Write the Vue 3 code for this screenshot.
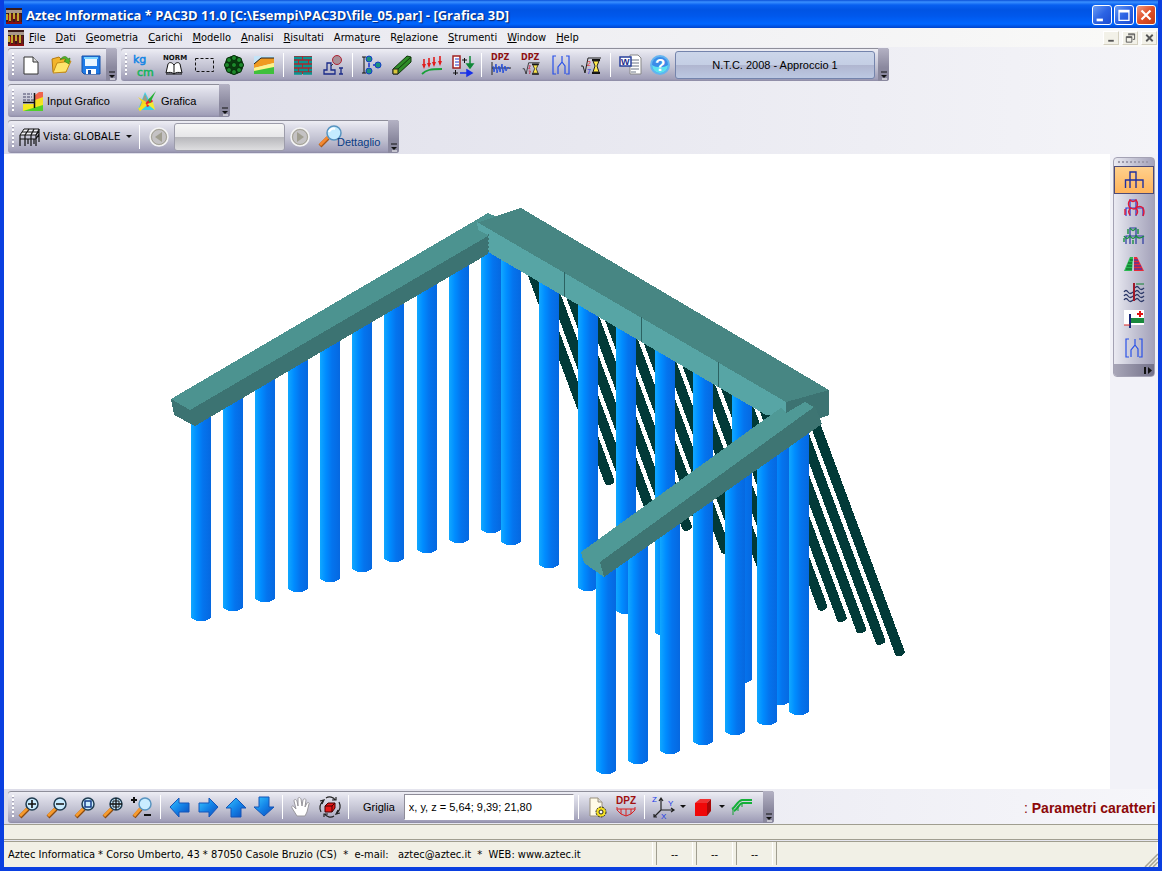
<script setup>
const menus = [
  ['', 'F', 'ile'], ['', 'D', 'ati'], ['', 'G', 'eometria'], ['', 'C', 'arichi'], ['', 'M', 'odello'], ['', 'A', 'nalisi'],
  ['', 'R', 'isultati'], ['Arma', 't', 'ure'], ['R', 'e', 'lazione'], ['', 'S', 'trumenti'], ['', 'W', 'indow'], ['', 'H', 'elp']
]

const lens = `<path d="M2 22l8-8" stroke="#8a4a10" stroke-width="4"/><path d="M2 21l8-8" stroke="#f79a2c" stroke-width="3"/><circle cx="14" cy="9" r="6" fill="#c9ecff" stroke="#203c50" stroke-width="1.5"/>`
const dpz = `<text x="2" y="7" font-family="DejaVu Sans" font-size="8" font-weight="bold" fill="#8e1010">DPZ</text>`
const root = `<path d="M2 13h2l2 7 3-15h13" fill="none" stroke="#222"/><path d="M13 7h8M13 20h8" stroke="#111" stroke-width="2"/><path d="M14 8h6l-2 5 2 6h-6l2-6z" fill="#ffe94a" stroke="#222"/>`
const rootDigits = `<text x="8" y="13" font-size="7" fill="#e01818">2</text><text x="8" y="21" font-size="7" fill="#1830e0">7</text>`
const brackets = `<path d="M7 3H4v18h3M17 3h3v18h-3M13 3v6l-4 5v7M13 9l3 4v8" fill="none" stroke="#2850e8" stroke-width="1.2"/>`

const icons = {
  app: `<rect width="16" height="16" fill="#3a1a18"/><path d="M0 2h16v3H0z" fill="#a8988c"/><path d="M1 6v6M4 5v8M8 5v6M12 5v8" stroke="#f0d838" stroke-width="1.500"/><path d="M2.500 7v9M6 6v10M10 7v9M14 6v10" stroke="#a01818"/><path d="M0 14h16v2H0z" fill="#8a1010"/>`,
  new: `<path d="M5 4h9l5 5v12H5z" fill="#fff" stroke="#333"/><path d="M14 4v5h5" fill="#ddd" stroke="#333"/>`,
  open: `<path d="M3 6l7-2 2 2h5v13H4z" fill="#f3b52b" stroke="#b47a10"/><path d="M4 20l4-10 14-2-5 11z" fill="#ffe56c" stroke="#c48b18"/><path d="M11 7c3-5 7-4 8-1l2-1-1 6-5-3 2-1c-1-2-3-2-6 0z" fill="#54b428" stroke="#2f7a16" stroke-width=".6"/>`,
  save: `<path d="M3 3h18v18H5l-2-2z" fill="#1f7be8" stroke="#1450a8"/><path d="M6 4h12v9H6z" fill="#eaf6ff"/><path d="M5 4h14v2H5z" fill="#7cd4ff"/><path d="M7 16h10v5H7z" fill="#fff"/><path d="M9 17h3v4H9z" fill="#1450a8"/>`,
  kg: `<g font-family="DejaVu Sans"><text x="1" y="10" font-size="11" fill="#1484e4" stroke="#1484e4" stroke-width=".5">kg</text><text x="5" y="23" font-size="11" fill="#14b45c" stroke="#14b45c" stroke-width=".5">cm</text></g>`,
  norm: `<text x="1" y="7" font-family="DejaVu Sans" font-size="7" font-weight="bold" fill="#111">NORM</text><path d="M12 12c-2-3-5-3-6-1l-2 9c3-1 6-1 8 1 2-2 5-2 8-1l-2-9c-1-2-4-2-6 1z" fill="#fff" stroke="#111"/><path d="M12 12v9M4 21h16" stroke="#111"/>`,
  rect: `<rect x="3.500" y="5.500" width="18" height="13" fill="none" stroke="#111" stroke-dasharray="3 2"/>`,
  bush: `<circle cx="12" cy="12" r="9.500" fill="#0a3a10"/><g fill="#1d8a2c" stroke="#062f0a"><circle cx="12" cy="12" r="2.500"/><circle cx="12" cy="5" r="2.500"/><circle cx="12" cy="19" r="2.500"/><circle cx="5" cy="12" r="2.500"/><circle cx="19" cy="12" r="2.500"/><circle cx="7" cy="7" r="2.500"/><circle cx="17" cy="7" r="2.500"/><circle cx="7" cy="17" r="2.500"/><circle cx="17" cy="17" r="2.500"/></g>`,
  layers: `<rect x="2" y="3" width="20" height="18" fill="#c4e4f8"/><path d="M2 11l7-6h13v5L2 15z" fill="#f09a20"/><path d="M2 15l20-5v5L2 19z" fill="#fff38a"/><path d="M2 18l20-4v7H2z" fill="#3fc03c"/><path d="M2 11l7-6h13" fill="none" stroke="#222"/>`,
  brick: `<rect x="3" y="3" width="18" height="18" fill="#a82830"/><path d="M3 5h8M12 5h9M3 9h4M8 9h9M18 9h3M3 13h8M12 13h9M3 17h4M8 17h9M18 17h3M3 20.500h8M12 20.500h9" stroke="#0a9490" stroke-width="2.600"/>`,
  found: `<circle cx="16" cy="7" r="4.500" fill="#a89098" stroke="#b02030"/><path d="M3 21v-4h3v-7h4v7h4v4zM18 15h4M20 15v6M18 21h4" fill="none" stroke="#1a2a88" stroke-width="1.300"/><path d="M12 11l-2 2" stroke="#333"/>`,
  nodes: `<path d="M4 4v16M2 4h4M2 20h4" stroke="#111"/><g fill="#1a9080" stroke="#143cc8"><circle cx="9" cy="6" r="3"/><circle cx="9" cy="18" r="3"/><circle cx="18" cy="12" r="3"/></g><path d="M9 10v4M13 12h2" stroke="#1b30d0" stroke-width="1.500"/>`,
  beam: `<path d="M3 16L17 3l4 1v5L8 21H3z" fill="#2f8c28" stroke="#10380c"/><path d="M3 16h5v5H3z" fill="#d8c83c" stroke="#222"/><path d="M8 16L21 4" stroke="#10380c"/>`,
  load: `<path d="M4 6v8M9 5v8M14 4v8M20 3v8" stroke="#e01c1c" stroke-width="1.600"/><path d="M2 11l2 5 2-5zM7 10l2 5 2-5zM12 9l2 5 2-5zM18 8l2 5 2-5z" fill="#e01c1c"/><path d="M2 21c4-4 8-5 20-5" fill="none" stroke="#18a038" stroke-width="1.800"/>`,
  comb: `<path d="M3 3h7v12H3z" fill="#fff" stroke="#a02020" stroke-width="1.500"/><path d="M5 6h4M5 9h4M5 12h4" stroke="#2038c8"/><path d="M12 7h5M14.500 5v5M3 20h5M5.500 17v5" stroke="#111"/><path d="M20 3v10M17 11l3 4 3-4z" stroke="#108838" stroke-width="1.500" fill="#108838"/><path d="M10 20h9M17 17l5 3-5 3z" stroke="#1830e8" stroke-width="1.500" fill="#1830e8"/>`,
  dpzWave: dpz + `<path d="M3 9v13M3 15h19" stroke="#222"/><path d="M4 13l1 6 2-8 1 9 2-7 1 6 2-8 1 9 2-7 1 5 2-4 2 2" fill="none" stroke="#2850d8"/>`,
  dpzRoot: dpz + `<g transform="translate(2 6) scale(.85 .75)">${root}<path d="M9 9h2l-2 4h2M9 16h2l-1 4" fill="none" stroke="#d02040"/></g>`,
  brackets, root: root + rootDigits,
  word: `<path d="M12 2h8l3 3v16H12z" fill="#fff" stroke="#888"/><path d="M13 7h8M13 10h8M13 13h8M13 16h8M13 19h5" stroke="#6a7484"/><path d="M2 4h11v9H2z" fill="#fff" stroke="#28409c" stroke-width="1.500"/><text x="3" y="12" font-size="9" font-weight="bold" fill="#1c2c8c">W</text>`,
  help: `<circle cx="12" cy="12" r="10" fill="#64b4f0"/><circle cx="12" cy="12" r="8" fill="#3c8ce8"/><path d="M4 12a8 8 0 0 0 16 0c-4 3-12 3-16 0z" fill="#5ce0f0"/><text x="7" y="18" font-size="17" font-weight="bold" fill="#fff">?</text>`,
  inputG: `<path d="M2 5h9M2 8h9M2 11h11" stroke="#446" stroke-dasharray="3 1"/><path d="M14 6l4-3h4v6l-8 3z" fill="#f0644c"/><path d="M14 11l8-3v6l-8 4z" fill="#f4e020"/><path d="M2 15h11v3l9-5v9H2z" fill="#f4e820"/><path d="M2 22l20-6v6z" fill="#50d028"/><path d="M13.500 4v15M2 13.500h11" stroke="#111" stroke-width="1.500"/>`,
  grafica: `<path d="M10 3l9 18H3z" fill="#38d0e8"/><path d="M10 5l5 12H5z" fill="#9c9c84"/><path d="M3 8l4 5-3 8 9-7z" fill="#f4d820"/><path d="M9 16l6-7 3 3-5 6z" fill="#e82028"/><path d="M12 15l6-2 2 8z" fill="#f4ec30"/><path d="M13 11L21 2l-6 12z" fill="#20b030"/><path d="M4 21l7-6" stroke="#f8e020" stroke-width="3"/>`,
  vista: `<path d="M2 10l4-6h15l-3 6z" fill="#f4f4f8" stroke="#111"/><path d="M7 10l4-6M13 10l3-6M4 7h16M2 10v11M7 10v11M13 10v11M18 10v11M21 4v13M2 14h16l3-5M18 10l3-4M10 14v5M16 14v5" fill="none" stroke="#111" stroke-width="1.200"/>`,
  prev: `<circle cx="12" cy="12" r="9" fill="#c4c2c4" stroke="#f4f4f4" stroke-width="1.500"/><circle cx="12" cy="12" r="7.500" fill="none" stroke="#a4a294"/><path d="M15 7v10l-7-5z" fill="#a09e90"/>`,
  next: `<circle cx="12" cy="12" r="9" fill="#c4c2c4" stroke="#f4f4f4" stroke-width="1.500"/><circle cx="12" cy="12" r="7.500" fill="none" stroke="#a4a294"/><path d="M9 7v10l7-5z" fill="#a09e90"/>`,
  detail: `<path d="M1 21l8-8" stroke="#a85818" stroke-width="4"/><path d="M1 20l8-8" stroke="#f48830" stroke-width="3"/><circle cx="15" cy="8" r="7" fill="#c4ecff" stroke="#5894c0" stroke-width="1.500"/><path d="M10 7c1-3 4-4 6-3" stroke="#fff" stroke-width="2" fill="none"/>`,
  zin: lens + `<path d="M10 9h8M14 5v8" stroke="#111" stroke-width="1.600"/>`,
  zout: lens + `<path d="M10 9h8" stroke="#111" stroke-width="1.600"/>`,
  zwin: lens + `<path d="M11 6h6v6h-6z" fill="none" stroke="#143c88" stroke-width="1.500"/>`,
  zall: lens + `<path d="M8 9h12M14 3v12" stroke="#111" stroke-width="1.300"/><path d="M11 6h6v6h-6z" fill="none" stroke="#111"/>`,
  zdyn: `<path d="M4 22l7-8" stroke="#8a4a10" stroke-width="4"/><path d="M4 21l7-8" stroke="#f79a2c" stroke-width="3"/><circle cx="15" cy="9" r="6" fill="#c9ecff" stroke="#5894c0" stroke-width="1.500"/><path d="M1 5h6M4 2v6M14 20h7" stroke="#111" stroke-width="2"/>`,
  left: `<path d="M2 12l9-9v5h10v9H11v5z" fill="url(#blueArrow)" stroke="#1454b8"/>`,
  right: `<path d="M22 12l-9-9v5H3v9h10v5z" fill="url(#blueArrow)" stroke="#1454b8"/>`,
  up: `<path d="M12 3l10 10h-5v9H7v-9H2z" fill="url(#blueArrow)" stroke="#1454b8"/>`,
  down: `<path d="M12 21L2 12h5V2h10v10h5z" fill="url(#blueArrow)" stroke="#1454b8"/>`,
  hand: `<path d="M7 21l-5-8c-1-2 1-3 2-1l2 2-2-8c0-2 2-2 3 0l1 5 0-7c0-2 2-2 3 0l1 7 1-6c1-2 3-1 3 0l-1 7 2-4c1-1 3 0 2 1l-2 8-2 4z" fill="#fff" stroke="#98969c"/>`,
  rotate: `<path d="M8 3c3-2 8-1 9 2M21 7c2 4 1 8-2 11M16 21c-3 2-8 1-9-2M3 17c-2-4-1-8 2-11M4 9l2-4-4 1M14 5h4V2M20 15l-2 4 4-1M10 19H6v3" fill="none" stroke="#222" stroke-width="1.200"/><path d="M7 11l3-3h7v5l-3 4H7z" fill="#e81818" stroke="#400"/><path d="M7 11h7v6M14 11l3-3" fill="none" stroke="#400"/>`,
  page: `<path d="M4 3h8l4 4v14H4z" fill="#fffbe8" stroke="#99907c"/><path d="M12 3v4h4" fill="#ddd" stroke="#99907c"/><circle cx="15" cy="17" r="5" fill="#f4e020" stroke="#222" stroke-dasharray="2 1"/><circle cx="15" cy="17" r="2" fill="#fff" stroke="#222"/>`,
  dpzEnv: `<text x="2" y="9" font-size="10" font-weight="bold" fill="#a01010">DPZ</text><path d="M3 12v3l4 4 5 2 5-2 4-4v-3M3 14h18M7 14v5M12 14v7M17 14v5" fill="none" stroke="#d82020"/>`,
  axes: `<path d="M9 3v12h13M9 15l-7 7M7 6l2-3 2 3M19 13l3 2-3 2M2 19v3h3" fill="none" stroke="#222" stroke-width="1.200"/><g font-size="8" fill="#1838e8"><text x="0" y="7">Z</text><text x="16" y="11">Y</text><text x="9" y="24">X</text></g>`,
  cube: `<path d="M4 8l5-4h11l-4 4z" fill="#f03030"/><path d="M4 8h12v13H4z" fill="#f00808"/><path d="M16 8l4-4v12l-4 5z" fill="#a80808"/>`,
  rail: `<path d="M2 14C6 12 7 6 12 5h10M4 16c4-2 5-8 9-8h9" fill="none" stroke="#14b038" stroke-width="2"/><path d="M3 14v6M8 11v5M12 8v4" stroke="#14a034"/>`,
  frame: `<path d="M3.500 20v-8H21v8M8 20V4h6v16" fill="none" stroke="#2030a0" stroke-width="1.400"/>`,
  frameRed: `<path d="M4 20v-8h17v8M8 20V4h6v16" fill="none" stroke="#2838d0" stroke-width="1.200"/><path d="M3 13v6M8 12q-3-4 0-8 3 3 6 0 3 4 0 8 4-3 7 0 2 4 0 8M8 19q-3-4 1-7 3 2 5 0 3 4 0 7" fill="none" stroke="#e01838" stroke-width="1.400"/>`,
  frameGreen: `<path d="M4 20v-8h17v8M8 20V4h6v16" fill="none" stroke="#2838a0" stroke-width="1.200"/><path d="M8 4q3 5 6 0M2 12q3 5 6 0 3 5 6 0 3 4 8 0M6 5v5M16 5v5M2 14v4M11 16v4" fill="none" stroke="#189040" stroke-width="1.400"/>`,
  press: `<path d="M11 5H8L2 19h8z" fill="#28b850"/><path d="M8 8h3M6 11h4M5 14h5M4 17h6" stroke="#085820"/><path d="M12 5v14h10L15 5z" fill="#e82838"/><path d="M12 8h4M12 11h5M12 14h7M12 17h8" stroke="#1838c0"/>`,
  ground: `<path d="M2 12q2-3 4 0t5 0M2 16q2-3 4 0t5 0M2 20q2-3 4 0t5 0M13 8q2-3 4 0t5 0M13 12q2-3 4 0t5 0M13 16q2-3 4 0t5 0M13 20q2-3 4 0t5 0" fill="none" stroke="#2c3868" stroke-width="1.300"/><path d="M12 3v18" stroke="#a01828" stroke-width="2"/><path d="M14 4h8" stroke="#108030"/>`,
  plus: `<path d="M2 2h20v15H2z" fill="#fff"/><path d="M9 10h13v5H9z" fill="#18883c"/><path d="M8 6v14" stroke="#182878" stroke-width="2"/><path d="M2 17h6" stroke="#d82020"/><path d="M18 3v6M15 6h6" stroke="#e01010" stroke-width="2"/>`
}

const fileTools = [['new', 'Nuovo'], ['open', 'Apri'], ['save', 'Salva']]
const mainTools = [
  [['kg', 'Unità di misura'], ['norm', 'Normativa'], ['rect', 'Selezione'], ['bush', 'Materiali'], ['layers', 'Terreni']],
  [['brick', 'Muratura'], ['found', 'Fondazione']],
  [['nodes', 'Nodi'], ['beam', 'Travi'], ['load', 'Carichi'], ['comb', 'Combinazioni']],
  [['dpzWave', 'Analisi'], ['dpzRoot', 'Calcolo opzioni'], ['brackets', 'Diagrammi'], ['root', 'Calcolo']],
  [['word', 'Relazione'], ['help', 'Aiuto']]
]
const viewTools = [
  [['zin', 'Ingrandisci'], ['zout', 'Riduci'], ['zwin', 'Zoom finestra'], ['zall', 'Zoom tutto'], ['zdyn', 'Zoom dinamico']],
  [['left', 'Sinistra'], ['right', 'Destra'], ['up', 'Su'], ['down', 'Giù']],
  [['hand', 'Sposta'], ['rotate', 'Ruota']]
]
const sideTools = [['frame', 'Struttura'], ['frameRed', 'Deformata'], ['frameGreen', 'Sollecitazioni'], ['press', 'Pressioni'], ['ground', 'Terreno'], ['plus', 'Carichi'], ['brackets', 'Diagrammi']]
const cells = ['--', '--', '--', '']

const row = (xs, bottoms, topAt) => xs.map((x, i) => ({ x, top: topAt(x), bottom: bottoms[i] }))
const leftPiles = row([191, 223, 255, 288, 320, 352, 384, 417, 449, 481], [619, 609, 600, 590, 580, 570, 560, 551, 541, 531], x => 412 - (x - 191) * 0.587)
const backPiles = row([501, 539, 578, 616, 655, 693, 732, 770], [543, 566, 589, 612, 634, 655, 681, 703], x => 252 + (x - 501) * 0.594)
const frontPiles = row([596, 628, 660, 693, 725, 757, 789], [772, 762, 752, 743, 733, 723, 713], x => 562 - (x - 596) * 0.697)
const piles = [...leftPiles, ...backPiles, ...frontPiles]
const pilePath = p => `M${p.x} ${p.top}h20V${p.bottom - 2}q-2 4-10 4t-10-4z`
const ties = Array.from({ length: 16 }, (_, i) => ({ x: 900 - i * 19.35, y: 653 - i * 11.4 }))
</script>

<template>
  <div class="window">
    <svg class="defs" aria-hidden="true">
      <defs>
        <linearGradient id="blueArrow" x1="0" y1="0" x2="1" y2="1">
          <stop offset="0" stop-color="#38c8ff" /><stop offset=".5" stop-color="#1484e8" /><stop offset="1" stop-color="#0c48b8" />
        </linearGradient>
      </defs>
    </svg>

    <header class="titlebar">
      <svg class="app-icon" viewBox="0 0 16 16" v-html="icons.app"></svg>
      <h1>Aztec Informatica * PAC3D 11.0 [C:\Esempi\PAC3D\file_05.par] - [Grafica 3D]</h1>
      <button class="win" aria-label="Riduci a icona"><svg viewBox="0 0 20 20"><path d="M4 14h7v3H4z" fill="#fff" /></svg></button>
      <button class="win" aria-label="Ingrandisci finestra"><svg viewBox="0 0 20 20"><path d="M4.500 5h11v11h-11zM4.500 6.500h11" fill="none" stroke="#fff" stroke-width="1.500" /></svg></button>
      <button class="win close" aria-label="Chiudi"><svg viewBox="0 0 20 20"><path d="M5 5l10 10M15 5L5 15" stroke="#fff" stroke-width="2.400" /></svg></button>
    </header>

    <nav class="menubar">
      <svg class="app-icon" viewBox="0 0 16 16" v-html="icons.app"></svg>
      <button v-for="m in menus" :key="m.join('')" class="menu">{{ m[0] }}<u>{{ m[1] }}</u>{{ m[2] }}</button>
      <span class="grow"></span>
      <button class="mdi" aria-label="Riduci documento"><svg viewBox="0 0 14 13"><path d="M4 9.500h6" stroke="#555" stroke-width="2" /></svg></button>
      <button class="mdi" aria-label="Ripristina documento"><svg viewBox="0 0 14 13"><path d="M5 2h7v6h-2M3 5h6v6H3zM5 3h7M3 6h6" fill="none" stroke="#555" /></svg></button>
      <button class="mdi" aria-label="Chiudi documento"><svg viewBox="0 0 14 13"><path d="M4 3l7 7M11 3l-7 7" stroke="#555" stroke-width="2" /></svg></button>
    </nav>

    <section class="bars">
      <div class="bar-row">
        <div class="toolbar">
          <i class="grip"></i>
          <button v-for="t in fileTools" :key="t[0]" class="tool" :aria-label="t[1]"><svg viewBox="0 0 24 24" v-html="icons[t[0]]"></svg></button>
          <button class="more" aria-label="Altri pulsanti file"><svg viewBox="0 0 11 10"><path d="M3 1h6" stroke="#111" /><path d="M3 4h6L6 7z" fill="#111" /><path d="M4 8h5" stroke="#fff" /></svg></button>
        </div>
        <div class="toolbar">
          <i class="grip"></i>
          <template v-for="(group, g) in mainTools" :key="g">
            <i v-if="g" class="sep"></i>
            <button v-for="t in group" :key="t[0]" class="tool" :aria-label="t[1]"><svg viewBox="0 0 24 24" v-html="icons[t[0]]"></svg></button>
          </template>
          <button class="norm">N.T.C. 2008 - Approccio 1</button>
          <button class="more" aria-label="Altri pulsanti principali"><svg viewBox="0 0 11 10"><path d="M3 1h6" stroke="#111" /><path d="M3 4h6L6 7z" fill="#111" /><path d="M4 8h5" stroke="#fff" /></svg></button>
        </div>
      </div>

      <div class="bar-row">
        <div class="toolbar">
          <i class="grip"></i>
          <button class="labelled first"><svg viewBox="0 0 24 24" v-html="icons.inputG"></svg>Input Grafico</button>
          <button class="labelled second"><svg viewBox="0 0 24 24" v-html="icons.grafica"></svg>Grafica</button>
          <button class="more" aria-label="Altri pulsanti grafica"><svg viewBox="0 0 11 10"><path d="M3 1h6" stroke="#111" /><path d="M3 4h6L6 7z" fill="#111" /><path d="M4 8h5" stroke="#fff" /></svg></button>
        </div>
      </div>

      <div class="bar-row">
        <div class="toolbar">
          <i class="grip"></i>
          <button class="labelled view"><svg viewBox="0 0 24 24" v-html="icons.vista"></svg>Vista: GLOBALE<b class="caret"></b></button>
          <i class="sep"></i>
          <button class="tool" aria-label="Precedente"><svg viewBox="0 0 24 24" v-html="icons.prev"></svg></button>
          <button class="blank" aria-label="Fase corrente"></button>
          <button class="tool" aria-label="Successivo"><svg viewBox="0 0 24 24" v-html="icons.next"></svg></button>
          <button class="detail"><svg viewBox="0 0 24 24" v-html="icons.detail"></svg><span>Dettaglio</span></button>
          <button class="more" aria-label="Altri pulsanti vista"><svg viewBox="0 0 11 10"><path d="M3 1h6" stroke="#111" /><path d="M3 4h6L6 7z" fill="#111" /><path d="M4 8h5" stroke="#fff" /></svg></button>
        </div>
      </div>
    </section>

    <main class="work">
      <div class="canvas">
        <svg viewBox="4 154 1106 635" preserveAspectRatio="xMidYMid meet" shape-rendering="crispEdges" role="img" aria-label="Modello 3D della paratia">
          <defs>
            <linearGradient id="pile">
              <stop offset="0" stop-color="#10a8ff" /><stop offset=".3" stop-color="#008cff" /><stop offset=".6" stop-color="#0474ee" /><stop offset="1" stop-color="#0668e0" />
            </linearGradient>
          </defs>
          <g fill="#023a38">
            <template v-for="(t, i) in ties" :key="i">
              <path :d="`M${t.x} ${t.y}l-86 -232`" stroke="#023a38" stroke-width="10" />
              <ellipse :cx="t.x" :cy="t.y" rx="5" ry="3" :transform="`rotate(-20 ${t.x} ${t.y})`" />
            </template>
          </g>
          <path v-for="(p, i) in piles" :key="i" :d="pilePath(p)" fill="url(#pile)" />
          <path d="M171 399L488 213l9 4-9 20-298 175z" fill="#4c9390" />
          <path d="M171 399l19 11 298-174v18L195 426l-21-11z" fill="#3c7372" />
          <path d="M477 223l20-7 24-8 308 182-43 15z" fill="#478683" />
          <path d="M477 222l309 180v13h-20L488 252v-17l-10-5z" fill="#57a5a5" />
          <path d="M786 402l43-12v25l-9 3-20 10-14-8z" fill="#3c7372" />
          <path d="M564.500 272v25M641.500 317v25M718.500 362v25" stroke="#2c6262" />
          <path d="M488.500 234v18" stroke="#3c7372" stroke-dasharray="2 2" />
          <path d="M598 561l216-156 6 13 2 6-218 153z" fill="#3e7573" />
          <path d="M581 552l184-133 16-11 5 5 19-11 9 5-214 155 4 15-20-14z" fill="#4f9996" />
        </svg>
      </div>
      <aside class="side">
        <div class="vbar">
          <i class="vgrip"></i>
          <button v-for="(t, i) in sideTools" :key="i" class="vtool" :class="{ active: i === 0 }" :aria-label="t[1]"><svg viewBox="0 0 24 24" v-html="icons[t[0]]"></svg></button>
          <button class="vmore" aria-label="Altri pulsanti laterali"><svg viewBox="0 0 10 9"><path d="M2 1v7" stroke="#111" stroke-width="2" /><path d="M5 1v7l4-3.500z" fill="#111" /></svg></button>
        </div>
      </aside>
    </main>

    <section class="lower">
      <div class="toolbar wide">
        <i class="grip"></i>
        <template v-for="(group, g) in viewTools" :key="g">
          <i v-if="g" class="sep"></i>
          <button v-for="t in group" :key="t[0]" class="tool" :aria-label="t[1]"><svg viewBox="0 0 24 24" v-html="icons[t[0]]"></svg></button>
        </template>
        <i class="sep"></i>
        <label class="grid-label" for="coords">Griglia</label>
        <input id="coords" class="coords" type="text" value="x, y, z = 5,64; 9,39; 21,80" />
        <i class="sep"></i>
        <button class="tool" aria-label="Impostazioni"><svg viewBox="0 0 24 24" v-html="icons.page"></svg></button>
        <button class="tool" aria-label="Inviluppo"><svg viewBox="0 0 24 24" v-html="icons.dpzEnv"></svg></button>
        <i class="sep"></i>
        <button class="tool drop" aria-label="Assi"><svg viewBox="0 0 24 24" v-html="icons.axes"></svg><b class="caret"></b></button>
        <button class="tool drop" aria-label="Solido"><svg viewBox="0 0 24 24" v-html="icons.cube"></svg><b class="caret"></b></button>
        <button class="tool" aria-label="Cordoli"><svg viewBox="0 0 24 24" v-html="icons.rail"></svg></button>
        <button class="more" aria-label="Altri pulsanti zoom"><svg viewBox="0 0 11 10"><path d="M3 1h6" stroke="#111" /><path d="M3 4h6L6 7z" fill="#111" /><path d="M4 8h5" stroke="#fff" /></svg></button>
      </div>
      <p class="params"><span>:</span> Parametri caratteri</p>
    </section>

    <div class="strip"></div>
    <footer class="status">
      <p>Aztec Informatica * Corso Umberto, 43 * 87050 Casole Bruzio (CS)&nbsp; *&nbsp; e-mail:&nbsp;&nbsp; aztec@aztec.it&nbsp; *&nbsp; WEB: www.aztec.it</p>
      <span v-for="(c, i) in cells" :key="i" class="cell">{{ c }}</span>
      <svg class="resize" viewBox="0 0 14 14"><path d="M1 14L14 1M5 14l9-9M9 14l5-5" stroke="#a8a594" stroke-width="1.500" /></svg>
    </footer>
  </div>
</template>

<style>
body { margin: 0; background: #0831d9; }
</style>

<style scoped>
.window {
  box-sizing: border-box;
  display: flex;
  flex-direction: column;
  height: 100vh;
  border: 4px solid #0a3fe0;
  border-top: 0;
  background: #e6e6ef;
  color: #000;
  font-family: "DejaVu Sans Condensed", "Liberation Sans", sans-serif;
  font-size: 11px;
  line-height: 14px;
  overflow: hidden;
}
.defs { position: absolute; width: 0; height: 0; }
button {
  box-sizing: border-box;
  margin: 0;
  padding: 0;
  border: 0;
  background: none;
  color: inherit;
  font: inherit;
  white-space: nowrap;
}
svg { display: block; flex: none; overflow: visible; font-family: "Liberation Sans", sans-serif; }
p, h1 { margin: 0; }
.grow { flex: 1; }

.titlebar {
  display: flex;
  align-items: center;
  gap: 2px;
  height: 28px;
  flex: none;
  margin: 0 -4px;
  padding: 0 6px;
  background: linear-gradient(#0a50d8, #3a90ff 2px, #0860f0 5px, #0054e4 10px, #0058ec 16px, #0066ff 24px, #0044cc);
}
.titlebar .app-icon { margin-top: 3px; }
.app-icon { width: 16px; height: 16px; }
h1 {
  flex: 1;
  margin-left: 2px;
  margin-top: 2px;
  color: #fff;
  font-family: "Open Sans", "Noto Sans", sans-serif;
  font-size: 13px;
  font-weight: 700;
  line-height: 18px;
  text-shadow: 1px 1px 1px #0a246a;
  white-space: nowrap;
}
.win {
  width: 20px;
  height: 20px;
  margin-top: 2px;
  border: 1px solid #fff;
  border-radius: 3px;
  background: linear-gradient(135deg, #6a9cf4, #2c64e4 50%, #1c4cd0);
}
.win.close { background: linear-gradient(135deg, #f09a80, #e05028 50%, #c43c14); }
.win svg { width: 18px; height: 18px; }

.menubar {
  display: flex;
  align-items: center;
  gap: 10px;
  height: 19px;
  flex: none;
  padding: 0 1px 0 4px;
  background: linear-gradient(90deg, #e4e4ee, #fafaf8);
}
.menubar .app-icon { margin-right: -5px; }
.mdi {
  width: 16px;
  height: 14px;
  margin-left: -7px;
  background: #f2f1e8;
  border: 1px solid #fff;
  border-right-color: #d4d0c0;
  border-bottom-color: #d4d0c0;
}
.mdi svg { width: 14px; height: 12px; }

.bars {
  flex: none;
  display: flex;
  flex-direction: column;
  gap: 3px;
  padding: 1px 4px;
  background: linear-gradient(90deg, #dcdce8, #f4f4f8);
}
.bar-row { display: flex; gap: 4px; }
.toolbar {
  box-sizing: border-box;
  display: flex;
  align-items: center;
  height: 33px;
  border-radius: 3px;
  background: linear-gradient(#f0f0f6, #dadae6 25%, #c0c0d0 60%, #a09eb8 94%, #8c8aa4);
  box-shadow: inset 0 1px #8e8e9a;
  overflow: hidden;
}
.grip, .sep { display: block; flex: none; }
.grip {
  width: 2px;
  height: 24px;
  margin: 0 2px 0 4px;
  background: repeating-linear-gradient(#fff 0 2px, #a8a6b8 2px 3px, transparent 3px 4px);
}
.sep {
  width: 1px;
  height: 24px;
  margin: 0 4px;
  background: #fff;
}
.tool {
  display: flex;
  align-items: center;
  justify-content: center;
  flex: none;
  width: 30px;
  height: 28px;
}
.tool svg, .labelled svg, .detail svg, .vtool svg { width: 24px; height: 24px; }
.more {
  display: flex;
  align-items: flex-end;
  flex: none;
  align-self: stretch;
  width: 11px;
  margin-left: auto;
  background: linear-gradient(#b4b2c4, #8a889e 60%, #8a889e);
}
.more svg { width: 11px; height: 10px; }
.norm, .labelled, .detail, .grid-label, .coords { font-family: "Liberation Sans", Arial, sans-serif; }
.norm {
  width: 200px;
  height: 28px;
  margin-right: 3px;
  border: 1px solid #7484ac;
  border-radius: 3px;
  background: linear-gradient(#ccd6ea, #c4cee4 50%, #b0b6d0 51%, #bcc8e2);
}
.labelled {
  display: flex;
  align-items: center;
  gap: 2px;
  height: 28px;
}
.first { width: 119px; padding-left: 5px; }
.second { width: 84px; }
.view {
  width: 119px;
  padding-left: 2px;
  gap: 1px;
  font-family: Roboto, "Liberation Sans", sans-serif;
}
.caret {
  border: 3px solid transparent;
  border-top-color: #111;
  border-bottom: 0;
}
.view .caret { margin-left: 5px; }
.blank {
  width: 111px;
  height: 28px;
  border: 1px solid #9c9caa;
  border-radius: 3px;
  background: linear-gradient(#f6f6f6, #e6e6e8 50%, #b8b8bc 51%, #dedee0);
}
.detail {
  display: flex;
  align-items: center;
  width: 73px;
  height: 28px;
  padding-left: 4px;
  color: #0a3c84;
}
.detail span { margin: 10px 0 0 -6px; }

.work { flex: 1; display: flex; min-height: 0; }
.canvas { flex: 1; min-width: 0; background: #fff; }
.canvas svg { width: 100%; height: 100%; }
.side {
  width: 48px;
  box-sizing: border-box;
  padding: 3px 3px 0;
  background: #f2f2f8;
}
.vbar {
  display: flex;
  flex-direction: column;
  align-items: center;
  border: 1px solid #a4a2b4;
  border-radius: 4px;
  background: linear-gradient(90deg, #eaeaf2, #c4c4d4 50%, #a4a2ba);
  overflow: hidden;
}
.vgrip {
  width: 32px;
  height: 2px;
  margin: 3px 0;
  background: repeating-linear-gradient(90deg, #9c9aac 0 2px, transparent 2px 4px);
}
.vtool {
  display: flex;
  align-items: center;
  justify-content: center;
  width: 40px;
  height: 28px;
}
.vtool.active { border: 1px solid #4c4a78; background: linear-gradient(#ffd08c, #ffb45c); }
.vmore {
  display: flex;
  justify-content: flex-end;
  align-items: center;
  width: 100%;
  height: 12px;
  margin-top: 2px;
  padding-right: 1px;
  background: linear-gradient(90deg, #a8a6b8, #74728a);
}
.vmore svg { width: 10px; height: 9px; }

.lower {
  display: flex;
  align-items: center;
  flex: none;
  height: 35px;
  padding-left: 4px;
  background: linear-gradient(90deg, #dcdce8, #f6f6fa);
}
.wide { flex: none; width: 766px; height: 32px; }
.wide .tool { width: 28px; }
.wide .drop { width: 39px; justify-content: flex-start; padding-left: 2px; gap: 4px; }
.grid-label { margin: 0 9px; }
.coords {
  box-sizing: border-box;
  width: 170px;
  height: 26px;
  padding: 0 4px;
  border: 1px solid #fff;
  border-top-color: #8e8c98;
  border-left-color: #8e8c98;
  background: #fff;
  font-size: 11px;
  color: #000;
}
.wide .sep { margin: 0 5px 0 4px; }
.params {
  flex: 1;
  min-width: 0;
  margin-left: 250px;
  padding-top: 3px;
  overflow: hidden;
  color: #8c0808;
  font: 700 14px/18px "Liberation Sans", Arial, sans-serif;
  white-space: nowrap;
}
.params span { font-weight: 400; }

.strip {
  flex: none;
  height: 14px;
  border-top: 1px solid #a09e90;
  border-bottom: 1px solid #a09e90;
  background: #f1f0e6;
}
.status {
  display: flex;
  gap: 3px;
  flex: none;
  height: 23px;
  margin-top: 1px;
  border-top: 1px solid #a09e90;
  padding-bottom: 2px;
  background: #f1f0e6;
  line-height: 26px;
  position: relative;
}
.status p {
  box-sizing: border-box;
  width: 649px;
  padding-left: 4px;
  border-right: 1px solid #fff;
  white-space: nowrap;
}
.cell {
  box-sizing: border-box;
  width: 37px;
  border-left: 1px solid #a09e90;
  border-right: 1px solid #fff;
  text-align: center;
}
.cell:last-of-type { flex: 1; }
.resize { position: absolute; right: 0; bottom: 0; width: 14px; height: 14px; }
</style>
